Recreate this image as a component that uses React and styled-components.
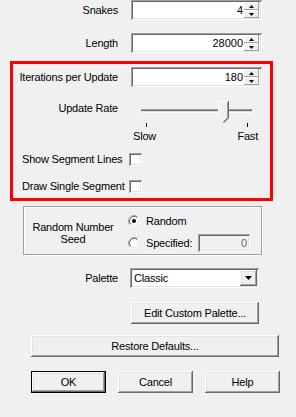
import React from 'react';
import styled, { createGlobalStyle, css } from 'styled-components';

const GlobalStyle = createGlobalStyle`
  html, body { margin: 0; padding: 0; background: #f0f0f0; }
  body { font-family: "Liberation Sans", Arial, sans-serif; font-size: 11px; letter-spacing: -0.2px; color: #000; }
  * { box-sizing: border-box; }
`;

const sunken = css`
  background: #fff;
  box-shadow: inset 1px 1px #a0a0a0, inset -1px -1px #fff, inset 2px 2px #696969, inset -2px -2px #e3e3e3;
`;

const raised = css`
  background: #f0f0f0;
  box-shadow: inset -1px -1px #696969, inset 1px 1px #fff, inset -2px -2px #a0a0a0, inset 2px 2px #e3e3e3;
`;

const Dialog = styled.div`
  width: 296px;
  height: 417px;
  background: #f0f0f0;
  display: flex;
  flex-direction: column;
  overflow: hidden;
`;

const FieldRow = styled.div`
  display: grid;
  grid-template-columns: ${p => p.$label}px ${p => p.$control ?? 131}px;
  column-gap: ${p => p.$gap ?? 13}px;
  align-items: ${p => p.$align ?? 'center'};
  margin-top: ${p => p.$top ?? 0}px;
`;

const Label = styled.span`
  text-align: right;
  line-height: 13px;
  white-space: nowrap;
  padding-top: ${p => p.$pt ?? 0}px;
`;

const SpinField = styled.div`
  ${sunken};
  height: 20px;
  display: flex;
  align-items: center;
  padding: 2px 3px 2px 2px;
`;

const SpinValue = styled.span`
  flex: 1;
  text-align: right;
  line-height: 16px;
  padding-right: 1px;
  letter-spacing: 0;
`;

const SpinButtons = styled.div`
  display: flex;
  flex-direction: column;
  width: 15px;
  height: 16px;
`;

const SpinButton = styled.div`
  flex: 1;
  display: flex;
  align-items: center;
  justify-content: center;
  background: #f0f0f0;
  box-shadow: inset -1px -1px #a0a0a0, inset 1px 1px #fff;
`;

const Highlight = styled.div`
  margin-top: 8px;
  margin-left: 10px;
  width: 263px;
  height: 140px;
  border: 3px solid #ff0000;
  padding-top: 3px;
  display: flex;
  flex-direction: column;
`;

const SliderColumn = styled.div`
  display: flex;
  flex-direction: column;
`;

const ScaleLabels = styled.div`
  display: flex;
  justify-content: space-between;
  line-height: 14px;
  padding: 0 4px 0 2px;
`;

const CheckRow = styled.div`
  display: flex;
  align-items: center;
  padding-left: 9px;
  margin-top: ${p => p.$top}px;
  height: 13px;
`;

const CheckLabel = styled.span`
  width: 107px;
  white-space: nowrap;
  line-height: 13px;
`;

const CheckBox = styled.span`
  ${sunken};
  width: 13px;
  height: 13px;
  display: inline-block;
`;

const GroupBox = styled.div`
  margin-top: 5px;
  margin-left: 23px;
  width: 239px;
  height: 49px;
  border: 1px solid #a0a0a0;
  box-shadow: inset 1px 1px #fff, 1px 1px #fff;
  display: flex;
`;

const GroupLabel = styled.div`
  width: 98px;
  text-align: center;
  line-height: 12px;
  padding-top: 14px;
`;

const RadioColumn = styled.div`
  margin-left: 6px;
  padding-top: 7px;
  display: flex;
  flex-direction: column;
`;

const RadioRow = styled.div`
  display: flex;
  align-items: center;
  height: ${p => p.$h}px;
  margin-top: ${p => p.$top ?? 0}px;
`;

const RadioText = styled.span`
  margin-left: 6px;
  line-height: 13px;
  white-space: nowrap;
  width: ${p => (p.$w ? `${p.$w}px` : 'auto')};
`;

const DisabledField = styled.div`
  ${sunken};
  background: #f0f0f0;
  width: 52px;
  height: 18px;
  text-align: right;
  padding-right: 3px;
  line-height: 18px;
  color: #6d6d6d;
`;

const Combo = styled.div`
  ${sunken};
  height: 20px;
  display: flex;
  align-items: center;
  padding: 2px;
`;

const ComboText = styled.span`
  flex: 1;
  padding-left: 2px;
  line-height: 16px;
`;

const ComboButton = styled.div`
  ${raised};
  width: 17px;
  height: 16px;
  display: flex;
  align-items: center;
  justify-content: center;
`;

const Button = styled.button`
  ${raised};
  border: none;
  margin: 0;
  padding: 0;
  font-family: inherit;
  font-size: 11px;
  letter-spacing: -0.2px;
  color: #000;
  height: 22px;
  width: ${p => p.$w}px;
  ${p => p.$default && css`
    box-shadow: inset 0 0 0 1px #000, inset -2px -2px #696969, inset 2px 2px #fff, inset -3px -3px #a0a0a0, inset 3px 3px #e3e3e3;
  `}
`;

const ButtonLine = styled.div`
  display: flex;
  gap: 12px;
  margin-top: ${p => p.$top}px;
  margin-left: ${p => p.$left}px;
`;

const Up = () => (
  <svg width="5" height="3" viewBox="0 0 5 3"><polygon points="2.5,0 5,3 0,3" fill="#000" /></svg>
);
const Down = () => (
  <svg width="5" height="3" viewBox="0 0 5 3"><polygon points="0,0 5,0 2.5,3" fill="#000" /></svg>
);

const Spin = ({ value }) => (
  <SpinField>
    <SpinValue>{value}</SpinValue>
    <SpinButtons>
      <SpinButton><Up /></SpinButton>
      <SpinButton><Down /></SpinButton>
    </SpinButtons>
  </SpinField>
);

const Slider = ({ pos }) => {
  const x = 15 + Math.round(pos * 101);
  return (
    <svg width="131" height="31" viewBox="0 0 131 31" shapeRendering="crispEdges">
      <rect x="10" y="11" width="111" height="1" fill="#a0a0a0" />
      <rect x="10" y="12" width="111" height="1" fill="#696969" />
      <rect x="10" y="13" width="111" height="1" fill="#e3e3e3" />
      <rect x="10" y="14" width="111" height="1" fill="#fff" />
      <polygon points={`${x - 5},3 ${x + 6},3 ${x + 6},19 ${x + 0.5},24.5 ${x - 5},19`} fill="#f0f0f0" shapeRendering="auto" />
      <rect x={x - 5} y="3" width="1" height="16" fill="#fff" />
      <rect x={x - 5} y="3" width="10" height="1" fill="#fff" />
      <rect x={x + 5} y="3" width="1" height="17" fill="#696969" />
      <rect x={x + 4} y="4" width="1" height="15" fill="#a0a0a0" />
      <path d={`M${x - 4.5} 19 L${x + 0.5} 24`} stroke="#fff" strokeWidth="1" shapeRendering="auto" />
      <path d={`M${x + 5.5} 19.5 L${x + 0.5} 24.5`} stroke="#696969" strokeWidth="1.2" shapeRendering="auto" />
      <rect x="15" y="25" width="1" height="4" fill="#000" />
      <rect x="116" y="25" width="1" height="4" fill="#000" />
    </svg>
  );
};

const Radio = ({ checked }) => (
  <svg width="12" height="12" viewBox="0 0 12 12">
    <circle cx="6" cy="6" r="5" fill="#fff" />
    <path d="M2.11 9.89 A5.5 5.5 0 0 1 9.89 2.11" stroke="#a0a0a0" fill="none" />
    <path d="M9.89 2.11 A5.5 5.5 0 0 1 2.11 9.89" stroke="#fff" fill="none" />
    <path d="M2.82 9.18 A4.5 4.5 0 0 1 9.18 2.82" stroke="#696969" fill="none" />
    <path d="M9.18 2.82 A4.5 4.5 0 0 1 2.82 9.18" stroke="#e3e3e3" fill="none" />
    {checked && <circle cx="6" cy="6" r="2" fill="#000" />}
  </svg>
);

export default function App() {
  return (
    <>
      <GlobalStyle />
      <Dialog>
        <FieldRow $label={118}>
          <Label>Snakes</Label>
          <Spin value="4" />
        </FieldRow>
        <FieldRow $label={118} $top={13}>
          <Label>Length</Label>
          <Spin value="28000" />
        </FieldRow>

        <Highlight>
          <FieldRow $label={105}>
            <Label>Iterations per Update</Label>
            <Spin value="180" />
          </FieldRow>
          <FieldRow $label={105} $top={11} $align="start">
            <Label $pt={4}>Update Rate</Label>
            <SliderColumn>
              <Slider pos={0.76} />
              <ScaleLabels>
                <span>Slow</span>
                <span>Fast</span>
              </ScaleLabels>
            </SliderColumn>
          </FieldRow>
          <CheckRow $top={10}>
            <CheckLabel>Show Segment Lines</CheckLabel>
            <CheckBox />
          </CheckRow>
          <CheckRow $top={14}>
            <CheckLabel>Draw Single Segment</CheckLabel>
            <CheckBox />
          </CheckRow>
        </Highlight>

        <GroupBox>
          <GroupLabel>Random Number<br />Seed</GroupLabel>
          <RadioColumn>
            <RadioRow $h={14}>
              <Radio checked />
              <RadioText>Random</RadioText>
            </RadioRow>
            <RadioRow $h={18} $top={6}>
              <Radio />
              <RadioText $w={52}>Specified:</RadioText>
              <DisabledField>0</DisabledField>
            </RadioRow>
          </RadioColumn>
        </GroupBox>

        <FieldRow $label={118} $gap={12} $control={129} $top={13}>
          <Label>Palette</Label>
          <Combo>
            <ComboText>Classic</ComboText>
            <ComboButton>
              <svg width="7" height="4" viewBox="0 0 7 4"><polygon points="0,0 7,0 3.5,4" fill="#000" /></svg>
            </ComboButton>
          </Combo>
        </FieldRow>

        <ButtonLine $top={14} $left={131}>
          <Button $w={128}>Edit Custom Palette...</Button>
        </ButtonLine>
        <ButtonLine $top={11} $left={31}>
          <Button $w={248}>Restore Defaults...</Button>
        </ButtonLine>
        <ButtonLine $top={14} $left={31}>
          <Button $w={75} $default>OK</Button>
          <Button $w={75}>Cancel</Button>
          <Button $w={75}>Help</Button>
        </ButtonLine>
      </Dialog>
    </>
  );
}
